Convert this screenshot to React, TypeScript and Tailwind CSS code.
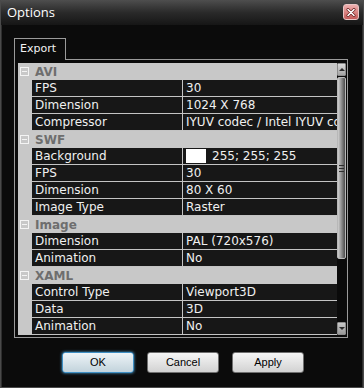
import React from "react";

type Row = { name: string; value: string; swatch?: boolean };
type Section = { title: string; rows: Row[] };

const sections: Section[] = [
  {
    title: "AVI",
    rows: [
      { name: "FPS", value: "30" },
      { name: "Dimension", value: "1024 X 768" },
      { name: "Compressor", value: "IYUV codec / Intel IYUV codec" },
    ],
  },
  {
    title: "SWF",
    rows: [
      { name: "Background", value: "255; 255; 255", swatch: true },
      { name: "FPS", value: "30" },
      { name: "Dimension", value: "80 X 60" },
      { name: "Image Type", value: "Raster" },
    ],
  },
  {
    title: "Image",
    rows: [
      { name: "Dimension", value: "PAL (720x576)" },
      { name: "Animation", value: "No" },
    ],
  },
  {
    title: "XAML",
    rows: [
      { name: "Control Type", value: "Viewport3D" },
      { name: "Data", value: "3D" },
      { name: "Animation", value: "No" },
    ],
  },
];

const gridFont = { fontFamily: '"DejaVu Sans", Verdana, sans-serif' };

const SectionHeader = ({ title }: { title: string }) => (
  <div className="flex h-[17px] items-center bg-[#c8c8c8]">
    <div className="flex w-[14px] shrink-0 pl-[2px]">
      {/* collapse box */}
      <div className="relative h-[9px] w-[9px] border border-[#f4f4f4]">
        <div className="absolute left-[1px] right-[1px] top-[3px] h-px bg-[#f4f4f4]" />
      </div>
    </div>
    <span className="pl-[3px] text-[12px] font-bold text-[#6e6e6e]">{title}</span>
  </div>
);

const PropRow = ({ row }: { row: Row }) => (
  <div className="flex h-[17px]">
    <div className="w-[14px] shrink-0 bg-[#c8c8c8]" />
    <div className="flex min-w-0 flex-1 border-b border-[#c4c4c4] bg-[#171717] text-[12px] text-[#f0f0f0]">
      <div className="flex w-[151px] shrink-0 items-center border-r border-[#c4c4c4] pl-[3px] whitespace-nowrap">
        {row.name}
      </div>
      <div className="flex min-w-0 flex-1 items-center overflow-hidden whitespace-nowrap pl-[3px]">
        {row.swatch && <span className="mr-[6px] h-[14px] w-[20px] shrink-0 bg-white" />}
        {row.value}
      </div>
    </div>
  </div>
);

const ScrollBar = () => (
  <div className="flex w-[9px] shrink-0 flex-col bg-[#0a0a0a]">
    {/* up arrow */}
    <div className="flex h-[13px] items-center justify-center rounded-[1px] border border-[#8c8c8c] bg-gradient-to-b from-[#dadada] to-[#a4a4a4]">
      <div className="h-0 w-0 border-x-[3px] border-b-[3px] border-x-transparent border-b-[#2a2a2a]" />
    </div>
    {/* thumb */}
    <div className="mt-px flex h-[182px] flex-col items-center justify-center rounded-[2px] border border-[#b8b8b8] bg-gradient-to-r from-[#cfcfcf] via-[#8e8e8e] to-[#4c4c4c]">
      <div className="flex flex-col gap-[2px]">
        <div className="h-px w-[5px] bg-[#2e2e2e]" />
        <div className="h-px w-[5px] bg-[#2e2e2e]" />
        <div className="h-px w-[5px] bg-[#2e2e2e]" />
      </div>
    </div>
    <div className="flex-1" />
    {/* down arrow */}
    <div className="flex h-[13px] items-center justify-center rounded-[1px] border border-[#8c8c8c] bg-gradient-to-b from-[#c8c8c8] to-[#9a9a9a]">
      <div className="h-0 w-0 border-x-[3px] border-t-[3px] border-x-transparent border-t-[#2a2a2a]" />
    </div>
  </div>
);

const DialogButton = ({ label, primary }: { label: string; primary?: boolean }) => (
  <button
    className={
      primary
        ? "h-[21px] w-[72px] rounded-[3px] border border-[#3f8fc4] bg-gradient-to-b from-[#eef4f7] to-[#c2d3dc] text-[11px] text-black shadow-[0_0_3px_#4fa9de]"
        : "h-[21px] w-[72px] rounded-[3px] border border-[#707070] bg-gradient-to-b from-[#f6f6f6] to-[#d2d2d2] text-[11px] text-black"
    }
    style={{ fontFamily: '"Liberation Sans", Arial, sans-serif' }}
  >
    {label}
  </button>
);

export default function App() {
  return (
    <div className="flex h-[388px] w-[364px] flex-col overflow-hidden border-x border-b border-[#4a4a4a] bg-[#0b0b0b]">
      {/* Title bar */}
      <div className="flex h-[25px] shrink-0 items-start bg-gradient-to-b from-[#4e4e4e] via-[#2a2a2a] to-[#161616] pl-[6px] pr-[4px]">
        <span
          className="mt-[3px] text-[13px] text-white"
          style={{ fontFamily: '"Open Sans", "Liberation Sans", sans-serif' }}
        >
          Options
        </span>
        <div className="ml-auto mt-[4px] flex h-[16px] w-[16px] items-center justify-center rounded-[3px] border border-[#e8c4c4] bg-gradient-to-b from-[#eeb0b0] to-[#c45a5a]">
          <svg width="10" height="9" viewBox="0 0 10 9">
            <path d="M2 1.5 L8 7.5 M8 1.5 L2 7.5" stroke="#6a2020" strokeWidth="3" strokeLinecap="round" />
            <path d="M2 1.5 L8 7.5 M8 1.5 L2 7.5" stroke="#ffffff" strokeWidth="1.6" strokeLinecap="round" />
          </svg>
        </div>
      </div>

      {/* Body */}
      <div className="flex flex-1 flex-col border-x border-[#2e2e2e] pl-[12px] pt-[13px]" style={gridFont}>
        <div className="relative z-10 -mb-px flex h-[22px] w-[52px] items-center border border-b-0 border-[#9a9a9a] bg-[#0b0b0b] pl-[5px] text-[11px] text-[#f2f2f2]">
          Export
        </div>
        <div className="flex w-[334px] border border-[#9a9a9a] pb-[2px] pl-[3px] pr-px pt-[3px]">
          <div className="flex w-[319px] shrink-0 flex-col">
            {sections.map((s) => (
              <div key={s.title}>
                <SectionHeader title={s.title} />
                {s.rows.map((r, i) => (
                  <PropRow key={s.title + i} row={r} />
                ))}
              </div>
            ))}
          </div>
          <ScrollBar />
        </div>

        {/* Buttons */}
        <div className="mt-[14px] flex gap-[13px] pl-[48px]">
          <DialogButton label="OK" primary />
          <DialogButton label="Cancel" />
          <DialogButton label="Apply" />
        </div>
      </div>
    </div>
  );
}
